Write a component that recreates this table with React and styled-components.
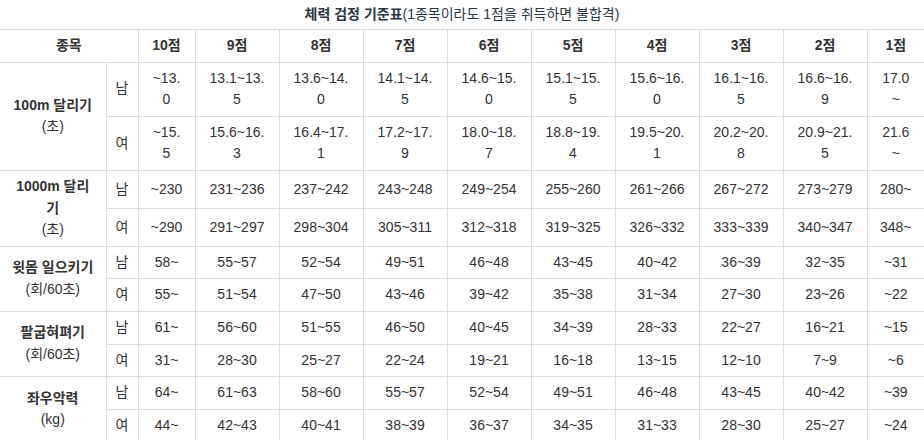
import React from "react";
import styled, { createGlobalStyle } from "styled-components";

const GlobalStyle = createGlobalStyle`
  html, body {
    margin: 0;
    padding: 0;
    background: #fff;
  }
  body {
    font-family: "Liberation Sans", Arial, "Noto Sans CJK KR", sans-serif;
    font-size: 14px;
    color: #333;
  }
`;

const Table = styled.table`
  width: 924px;
  table-layout: fixed;
  border-collapse: collapse;
  border-left: hidden;
  border-right: hidden;
  line-height: 21.6px;
`;

const Caption = styled.caption`
  padding: 4px 0;
  line-height: 21px;
  color: #2a3642;
  text-align: center;

  b {
    font-weight: 700;
  }
`;

const Head = styled.th`
  border: 1px solid #ddd;
  padding: 5px 4px;
  font-weight: 700;
  text-align: center;
  vertical-align: middle;
  color: #333;
`;

const Cell = styled.td`
  border: 1px solid #ddd;
  padding: 5px 11px;
  text-align: center;
  vertical-align: middle;
  word-break: break-all;
`;

const Label = styled(Cell)`
  padding: 5px 4px;
  word-break: keep-all;

  b {
    font-weight: 700;
  }
`;

const Gender = styled(Cell)`
  padding: 5px 0;
`;

const widths = [106, 32, 57, 84, 84, 84, 84, 84, 84, 84, 84, 57];
const scores = ["10점", "9점", "8점", "7점", "6점", "5점", "4점", "3점", "2점", "1점"];

const events = [
  {
    name: ["100m 달리기"],
    unit: "(초)",
    male: ["~13.0", "13.1~13.5", "13.6~14.0", "14.1~14.5", "14.6~15.0", "15.1~15.5", "15.6~16.0", "16.1~16.5", "16.6~16.9", "17.0~"],
    female: ["~15.5", "15.6~16.3", "16.4~17.1", "17.2~17.9", "18.0~18.7", "18.8~19.4", "19.5~20.1", "20.2~20.8", "20.9~21.5", "21.6~"],
  },
  {
    name: ["1000m 달리", "기"],
    unit: "(초)",
    male: ["~230", "231~236", "237~242", "243~248", "249~254", "255~260", "261~266", "267~272", "273~279", "280~"],
    female: ["~290", "291~297", "298~304", "305~311", "312~318", "319~325", "326~332", "333~339", "340~347", "348~"],
  },
  {
    name: ["윗몸 일으키기"],
    unit: "(회/60초)",
    male: ["58~", "55~57", "52~54", "49~51", "46~48", "43~45", "40~42", "36~39", "32~35", "~31"],
    female: ["55~", "51~54", "47~50", "43~46", "39~42", "35~38", "31~34", "27~30", "23~26", "~22"],
  },
  {
    name: ["팔굽혀펴기"],
    unit: "(회/60초)",
    male: ["61~", "56~60", "51~55", "46~50", "40~45", "34~39", "28~33", "22~27", "16~21", "~15"],
    female: ["31~", "28~30", "25~27", "22~24", "19~21", "16~18", "13~15", "12~10", "7~9", "~6"],
  },
  {
    name: ["좌우악력"],
    unit: "(kg)",
    male: ["64~", "61~63", "58~60", "55~57", "52~54", "49~51", "46~48", "43~45", "40~42", "~39"],
    female: ["44~", "42~43", "40~41", "38~39", "36~37", "34~35", "31~33", "28~30", "25~27", "~24"],
  },
];

const EventRows = ({ event }) => (
  <>
    <tr>
      <Label rowSpan={2}>
        {event.name.map((line, i) => (
          <React.Fragment key={i}>
            <b>{line}</b>
            <br />
          </React.Fragment>
        ))}
        {event.unit}
      </Label>
      <Gender>남</Gender>
      {event.male.map((v, i) => (
        <Cell key={i}>{v}</Cell>
      ))}
    </tr>
    <tr>
      <Gender>여</Gender>
      {event.female.map((v, i) => (
        <Cell key={i}>{v}</Cell>
      ))}
    </tr>
  </>
);

export default function App() {
  return (
    <>
      <GlobalStyle />
      <Table>
        <Caption>
          <b>체력 검정 기준표</b>(1종목이라도 1점을 취득하면 불합격)
        </Caption>
        <colgroup>
          {widths.map((w, i) => (
            <col key={i} style={{ width: w }} />
          ))}
        </colgroup>
        <thead>
          <tr>
            <Head colSpan={2}>종목</Head>
            {scores.map((s) => (
              <Head key={s}>{s}</Head>
            ))}
          </tr>
        </thead>
        <tbody>
          {events.map((ev) => (
            <EventRows key={ev.name.join("")} event={ev} />
          ))}
        </tbody>
      </Table>
    </>
  );
}
